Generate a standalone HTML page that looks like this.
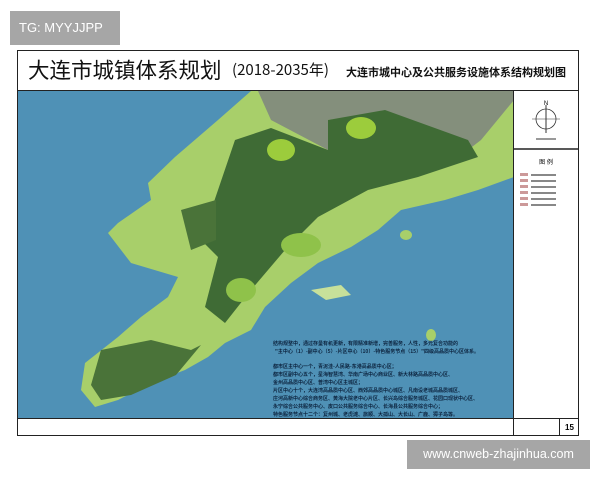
<!DOCTYPE html>
<html><head><meta charset="utf-8"><style>
body{margin:0;width:600px;height:480px;background:#fff;position:relative;overflow:hidden;font-family:"Liberation Sans","Noto Sans CJK SC",sans-serif}
.tg{position:absolute;left:10px;top:11px;width:110px;height:34px;background:#a6a6a6;color:#fff;font-size:13px;line-height:34px;text-indent:9px}
.frame{position:absolute;left:17px;top:50px;width:560px;height:384px;border:1.5px solid #222;background:#fff}
.title{position:absolute;left:0;top:0;width:560px;height:39px;border-bottom:1.5px solid #222}
.t1{position:absolute;left:10px;top:4px;font-size:21.5px;line-height:30px;color:#111;font-family:"Noto Sans CJK SC",sans-serif;white-space:nowrap}
.t2{position:absolute;left:214px;top:8px;font-size:15px;line-height:22px;color:#111;font-family:"Noto Sans CJK SC",sans-serif;white-space:nowrap}
.t3{position:absolute;left:328px;top:12px;font-size:11px;line-height:18px;color:#111;font-weight:bold;font-family:"Noto Sans CJK SC",sans-serif;white-space:nowrap}
.leg{position:absolute;left:495px;top:40px;width:65px;height:344px;border-left:1.5px solid #222}
.foot{position:absolute;left:0;top:367px;width:560px;border-top:1.5px solid #222;height:17px}
.pn{position:absolute;left:541px;top:0;height:17px;border-left:1.5px solid #222;width:19px;font-size:8px;text-align:center;line-height:17px;font-weight:bold}
.bot{position:absolute;left:407px;top:440px;width:183px;height:29px;background:#a6a6a6;color:#fff;font-size:12.5px;line-height:29px;text-align:center}
</style></head><body>
<div class="tg">TG: MYYJJPP</div>
<div class="frame">
<svg style="position:absolute;left:0;top:40px" width="495" height="327" viewBox="17 91 495 327">
<rect x="17" y="91" width="496" height="327" fill="#4f91b6"/>
<path d="M250 91 L513 91 L513 177 L477 190 L444 200 L400 210 L377 230 L350 247 L317 263 L290 283 L264 307 L250 330 L224 343 L207 357 L184 370 L150 383 L117 400 L94 407 L80 390 L84 363 L117 337 L140 317 L167 297 L177 277 L130 263 L107 233 L117 223 L150 200 L147 183 L174 157 L217 120 Z" fill="#a8cf6a"/>
<path d="M257 91 L513 91 L513 100 L480 140 L467 150 L400 120 L384 112 L327 120 L327 150 L270 120 Z" fill="#848f7c"/>
<path d="M270 128 L327 150 L327 120 L384 110 L467 140 L477 157 L417 177 L367 190 L317 217 L284 250 L250 290 L224 323 L204 307 L217 257 L200 240 L217 190 L234 140 Z" fill="#3f6b35"/>
<path d="M100 350 L150 340 L190 350 L200 345 L175 375 L130 395 L100 400 L90 385 Z" fill="#4a7339"/>
<path d="M180 210 L215 200 L215 240 L190 250 Z" fill="#4a7339"/>
<ellipse cx="360" cy="128" rx="15" ry="11" fill="#9ccc3c"/>
<ellipse cx="280" cy="150" rx="14" ry="11" fill="#9ccc3c"/>
<ellipse cx="300" cy="245" rx="20" ry="12" fill="#8fc24a"/>
<ellipse cx="240" cy="290" rx="15" ry="12" fill="#8fc24a"/>
<path d="M310 290 L340 285 L350 295 L325 300Z" fill="#c7e09a"/>
<ellipse cx="405" cy="235" rx="6" ry="5" fill="#a8cf6a"/>
<ellipse cx="430" cy="335" rx="5" ry="6" fill="#a8cf6a"/>
<g font-size="5" font-weight="bold" fill="#0d2540" font-family="Noto Sans CJK SC,sans-serif">
<text x="272" y="345">结构规整中，通过存量有机更新，有限精准新增，完善服务，人性，多元复合功能的</text>
<text x="274" y="353">"主中心（1）-副中心（5）-片区中心（10）-特色服务节点（15）"四级高品质中心区体系。</text>
<text x="272" y="368">都市区主中心一个，青泥洼-人民路-东港高品质中心区；</text>
<text x="272" y="376">都市区副中心五个，星海智慧湾、华南广场中心商业区、新大林路高品质中心区、</text>
<text x="272" y="384">金州高品质中心区、普湾中心区主城区；</text>
<text x="272" y="392">片区中心十个，大连湾高品质中心区、西郊高品质中心城区、凡南设老城高品质城区、</text>
<text x="272" y="400">庄河高新中心综合商务区、黄海大院老中心片区、长兴岛综合服务城区、花园口现状中心区、</text>
<text x="272" y="408">永宁综合公共服务中心、皮口公共服务综合中心、长海县公共服务综合中心；</text>
<text x="272" y="416">特色服务节点十二个：复州城、老虎滩、旅顺、大孤山、大长山、广鹿、獐子岛等。</text>
</g>
</svg>
<div class="title"><span class="t1">大连市城镇体系规划</span><span class="t2">(2018-2035年)</span><span class="t3">大连市城中心及公共服务设施体系结构规划图</span></div>
<div class="leg">
<svg width="65" height="120"><text x="32" y="14" font-size="6" text-anchor="middle">N</text><circle cx="32" cy="28" r="10" fill="none" stroke="#333" stroke-width=".8"/><line x1="32" y1="14" x2="32" y2="42" stroke="#333" stroke-width="1"/><line x1="18" y1="28" x2="46" y2="28" stroke="#333" stroke-width=".6"/><line x1="22" y1="48" x2="42" y2="48" stroke="#333"/><line x1="0" y1="58" x2="65" y2="58" stroke="#222" stroke-width="1.5"/><text x="32" y="73" font-size="6" text-anchor="middle">图 例</text>
<g fill="#c99"><rect x="6" y="82" width="8" height="3"/><rect x="6" y="88" width="8" height="3"/><rect x="6" y="94" width="8" height="3"/><rect x="6" y="100" width="8" height="3"/><rect x="6" y="106" width="8" height="3"/><rect x="6" y="112" width="8" height="3"/></g>
<g fill="#888"><rect x="17" y="83" width="25" height="2"/><rect x="17" y="89" width="25" height="2"/><rect x="17" y="95" width="25" height="2"/><rect x="17" y="101" width="25" height="2"/><rect x="17" y="107" width="25" height="2"/><rect x="17" y="113" width="25" height="2"/></g></svg>
</div>
<div class="foot"><div style="position:absolute;left:495px;top:0;height:17px;border-left:1.5px solid #222"></div><div class="pn">15</div></div>
</div>
<div class="bot">www.cnweb-zhajinhua.com</div>
</body></html>
